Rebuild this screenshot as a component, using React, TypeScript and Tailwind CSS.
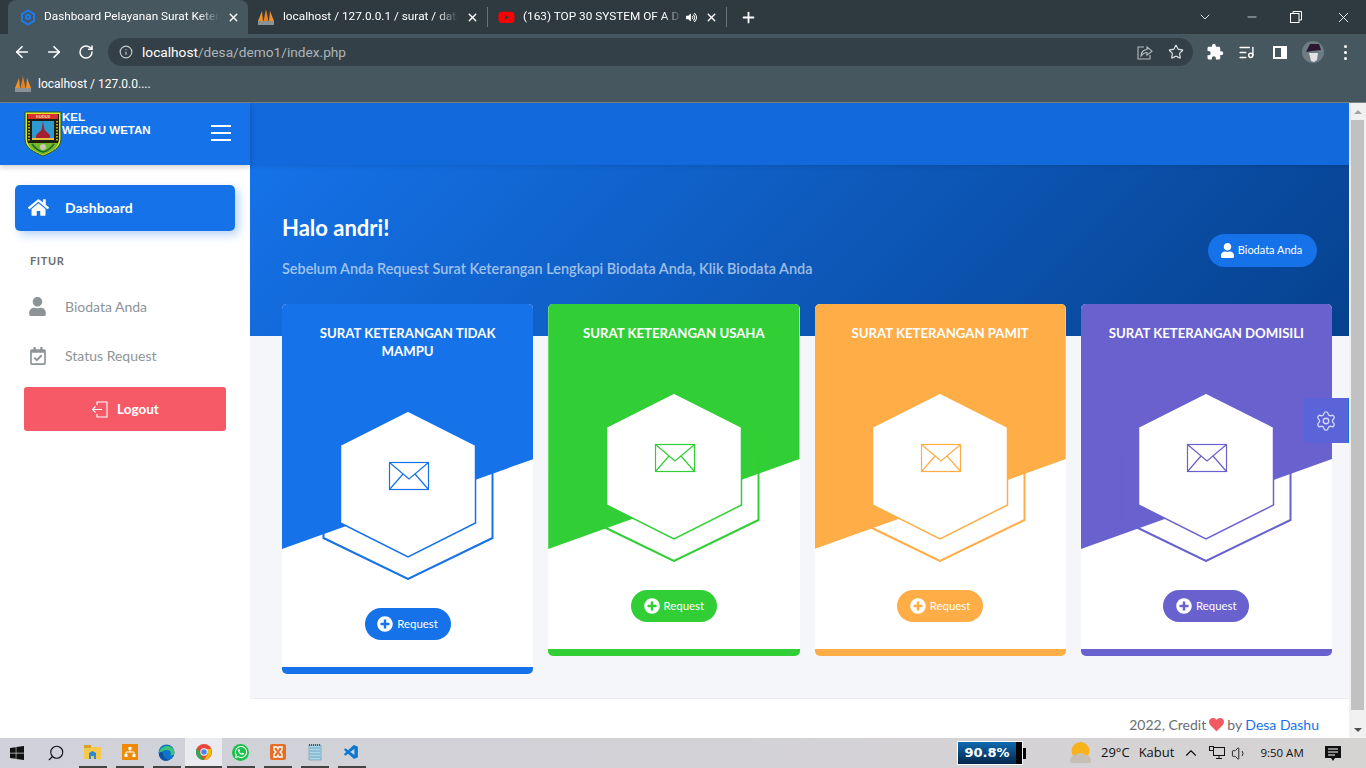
import { ArrowLeft, ArrowRight, ChevronDown, ChevronUp, Info, ListMusic, Minus, Plus, RotateCw, Search, Settings, Star, Volume1, X } from "lucide-react";
import { FaHeart, FaHome, FaPlusCircle, FaRegCalendarCheck, FaUser, FaVolumeUp, FaWhatsapp, FaWindows, FaYoutube } from "react-icons/fa";
import { MdExtension } from "react-icons/md";
import { VscVscode } from "react-icons/vsc";

const cards = [
  { title: "Surat Keterangan Tidak Mampu", color: "#1572e8", bg: "bg-[#1572e8]", border: "border-[#1572e8]" },
  { title: "Surat Keterangan Usaha", color: "#31ce36", bg: "bg-[#31ce36]", border: "border-[#31ce36]" },
  { title: "Surat Keterangan Pamit", color: "#ffad46", bg: "bg-[#ffad46]", border: "border-[#ffad46]" },
  { title: "Surat Keterangan Domisili", color: "#6861ce", bg: "bg-[#6861ce]", border: "border-[#6861ce]" },
];

function PmaIcon() {
  return (
    <svg width="18" height="18" viewBox="0 0 18 18">
      <path d="M1 13 5 3l1 10z" fill="#f0902a" />
      <path d="M6.500 13 9 1l2.500 12z" fill="#e8801c" />
      <path d="M12 13l1-10 4 10z" fill="#f0902a" />
      <rect x="1" y="13" width="16" height="4" fill="#8a9298" />
    </svg>
  );
}

function Tab({ title, icon, active, width, extra }: { title: string; icon: React.ReactNode; active?: boolean; width: string; extra?: React.ReactNode }) {
  return (
    <div className={`flex h-[34px] items-center pl-3 pr-2 ${width} ${active ? "rounded-t-lg bg-[#47575f]" : ""}`}>
      <div className="flex shrink-0 justify-center">{icon}</div>
      <span className="ml-2 min-w-0 flex-1 whitespace-nowrap text-[11.8px] text-white [mask-image:linear-gradient(to_right,black_88%,transparent)]">{title}</span>
      {extra}
      <X size={13} strokeWidth={2.5} className="ml-2 shrink-0 text-white" />
    </div>
  );
}

function BrowserChrome() {
  return (
    <div className="shrink-0 font-['Roboto',sans-serif]">
      <div className="flex h-[34px] items-center bg-[#2f3a40] pl-2 pr-0">
        <Tab
          active
          width="w-[240px]"
          title="Dashboard Pelayanan Surat Keter"
          icon={
            <svg width="16" height="17" viewBox="0 0 16 17" fill="none" stroke="#1a7cf0" strokeWidth="2">
              <path d="M8 1.500 14 5v7l-6 3.500L2 12V5z" />
              <circle cx="8" cy="8" r="2" />
            </svg>
          }
        />
        <Tab width="w-[242px] -ml-[3px]" title="localhost / 127.0.0.1 / surat / data" icon={<PmaIcon />} />
        <div className="h-[20px] w-px bg-[#66757c]" />
        <Tab
          width="w-[240px] -ml-[2px]"
          title="(163) TOP 30 SYSTEM OF A D"
          icon={<FaYoutube size={17} className="text-[#ff0000]" />}
          extra={<FaVolumeUp size={11} className="ml-1 shrink-0 text-white" />}
        />
        <div className="h-[20px] w-px bg-[#66757c]" />
        <Plus size={17} strokeWidth={2.5} className="ml-[13px] text-white" />
        <div className="ml-auto flex items-center text-white">
          <ChevronDown size={16} strokeWidth={1.25} className="mr-[32px]" />
          <Minus size={14} strokeWidth={1.25} className="mr-[31px]" />
          <svg width="12" height="12" viewBox="0 0 12 12" fill="none" stroke="white" className="mr-[33px]">
            <rect x="0.5" y="2.500" width="8.500" height="9" />
            <path d="M3 2V.5h8.500V9H9" />
          </svg>
          <X size={17} strokeWidth={1.25} className="mr-[14px]" />
        </div>
      </div>

      <div className="flex h-[34px] items-center bg-[#47575f] pl-[13px] pt-[2px]">
        <ArrowLeft size={18} strokeWidth={2.25} className="text-white" />
        <ArrowRight size={18} strokeWidth={2.25} className="ml-[14px] text-white" />
        <RotateCw size={16} strokeWidth={2.25} className="ml-[15px] text-white" />
        <div className="ml-[14px] flex h-[28px] w-[1085px] items-center rounded-full bg-[#344047] pl-[11px] pr-[9px]">
          <Info size={14} className="text-[#c5cbce]" />
          <span className="ml-[9px] text-[13.7px] text-white">localhost<span className="text-[#adb5b9]">/desa/demo1/index.php</span></span>
          <svg width="16" height="16" viewBox="0 0 16 16" fill="none" stroke="#b4bbbf" strokeWidth="1.1" className="ml-auto">
            <path d="M7 3H1v12h12v-4" />
            <path d="M4 12c0-4 3-6.500 6-6.500V3l5 4.200-5 4V8.500C7.500 8.500 5.500 10 4 12z" />
          </svg>
          <Star size={16} strokeWidth={1.75} className="ml-[15px] text-[#dfe3e5]" />
        </div>
        <MdExtension size={18} className="ml-[13px] text-white" />
        <ListMusic size={17} strokeWidth={2} className="ml-[14px] text-white" />
        <div className="ml-[18px] flex h-[13px] w-[14px] justify-start border-2 border-white">
          <div className="h-full w-[6px] bg-[#47575f]" />
          <div className="h-full flex-1 bg-white" />
        </div>
        <svg width="22" height="22" viewBox="0 0 22 22" className="ml-[15px]">
          <circle cx="11" cy="11" r="11" fill="#6e7c84" />
          <path d="M4 11 8 3h9l2 6-9 1z" fill="#2d1630" />
          <path d="M7 12h9l-1 7-3 2-3-1z" fill="#e2e2e2" />
        </svg>
        <div className="ml-[20px] flex flex-col gap-[3px]">
          <div className="size-[3px] rounded-full bg-white" />
          <div className="size-[3px] rounded-full bg-white" />
          <div className="size-[3px] rounded-full bg-white" />
        </div>
      </div>

      <div className="flex h-[35px] items-center border-b border-[#7a8488] bg-[#47575f] pb-[2px] pl-[14px]">
        <PmaIcon />
        <span className="ml-[6px] text-[12px] text-white">localhost / 127.0.0....</span>
      </div>
    </div>
  );
}

function CoatOfArms() {
  return (
    <svg width="38" height="46" viewBox="0 0 38 46">
      <path d="M1 1h36v27c0 9-9 13-18 17C10 41 1 37 1 28z" fill="#e5e22c" stroke="#1e5c22" />
      <path d="M3 3h32v25c0 7-8 11-16 14C11 39 3 35 3 28z" fill="#1d1d12" />
      <rect x="4" y="3" width="30" height="5" fill="#d8312d" />
      <text x="19" y="7" fontSize="4" fontWeight="700" textAnchor="middle" fill="#f4e7a0">KUDUS</text>
      <path d="M5 10v20M33 10v20" stroke="#e5e22c" strokeWidth="1.500" strokeDasharray="1.500 1.500" />
      <rect x="8" y="10" width="22" height="19" fill="#2e9bd0" />
      <path d="M19 10l1.500 9 5.500 5v5H12v-5l5.500-5z" fill="#a51f32" />
      <rect x="8" y="27" width="22" height="2" fill="#e8c23a" />
      <path d="M4 32h30c-1 6-9 9-15 12C13 41 5 38 4 32z" fill="#76b82a" />
      <path d="M8 33c3 4 7 7 11 8 4-1 8-4 11-8" fill="none" stroke="#176b2c" strokeWidth="1.500" />
      <circle cx="19" cy="36" r="3" fill="#c9c9b2" />
    </svg>
  );
}

function Sidebar() {
  return (
    <aside className="flex w-[250px] shrink-0 flex-col bg-white">
      <div className="relative z-10 flex h-[62px] items-start bg-[#1572e8] pl-[24px] pt-[8px] shadow-[0_2px_6px_rgba(0,0,0,0.2)]">
        <CoatOfArms />
        <p className="font-['Liberation_Sans',sans-serif] text-[11.5px] font-bold leading-[13px] text-white">KEL<br />WERGU WETAN</p>
        <div className="ml-auto mr-[19px] mt-[14px] flex w-[20px] flex-col gap-[5px]">
          <div className="h-[2px] bg-white" />
          <div className="h-[2px] bg-white" />
          <div className="h-[2px] bg-white" />
        </div>
      </div>
      <nav className="px-[15px] pt-[20px]">
        <div className="flex h-[46px] items-center rounded-[5px] bg-[#1572e8] pb-[2px] pl-[13px] text-white shadow-[4px_4px_10px_rgba(21,114,232,0.3)]">
          <FaHome size={21} />
          <span className="ml-[16px] text-[14px] font-bold">Dashboard</span>
        </div>
        <p className="mt-[23px] pl-[15px] text-[11px] font-bold leading-[14px] tracking-[0.6px] text-[#6b6e72]">FITUR</p>
        <div className="mt-[14px] flex h-[49px] items-center pl-[13px] text-[#8d9498]">
          <FaUser size={19} />
          <span className="ml-[18px] text-[14px]">Biodata Anda</span>
        </div>
        <div className="flex h-[49px] items-center pl-[14px] text-[#8d9498]">
          <FaRegCalendarCheck size={18} />
          <span className="ml-[18px] text-[14px]">Status Request</span>
        </div>
        <div className="ml-[9px] mt-[7px] flex h-[44px] w-[202px] items-center justify-center rounded-[3px] bg-[#f65a66] text-white">
          <svg width="17" height="17" viewBox="0 0 17 17" fill="none" stroke="white" strokeWidth="1.1">
            <path d="M6 4V1h10v15H6v-3" />
            <path d="M11 8.500H1.500M4.500 5.500l-3 3 3 3" />
          </svg>
          <span className="ml-[9px] text-[13.5px] font-bold">Logout</span>
        </div>
      </nav>
    </aside>
  );
}

function CardGraphic({ color }: { color: string }) {
  return (
    <svg width="172" height="170" viewBox="0 0 172 170" fill="none" className="relative">
      <path d="M1.500 63v65l84.500 41 84.500-41V63" stroke={color} strokeWidth="2" />
      <path d="M86 1 153.500 35v78L86 147l-67.500-34V35z" fill="white" stroke={color} strokeWidth="1.500" />
      <g stroke={color} strokeWidth="1.200">
        <rect x="67.500" y="52.500" width="39" height="27" />
        <path d="M67.500 52.500 87 69l19.500-16.500M67.500 79.500 81 64M106.500 79.500 93 64" />
      </g>
    </svg>
  );
}

function RequestCard({ title, color, bg, border }: { title: string; color: string; bg: string; border: string }) {
  return (
    <div className={`relative flex flex-1 flex-col items-center overflow-hidden rounded-[5px] border-b-[7px] bg-white px-[20px] pb-[27px] pt-[20px] ${border}`}>
      <div className={`absolute inset-x-0 top-0 h-[245px] [clip-path:polygon(0_0,100%_0,100%_63.3%,0_100%)] ${bg}`} />
      <h3 className="relative text-center text-[13.2px] font-bold uppercase leading-[18px] text-white">{title}</h3>
      <div className="relative mt-[50px]">
        <CardGraphic color={color} />
      </div>
      <div className={`relative mt-[28px] flex h-[32px] w-[86px] items-center justify-center rounded-full text-[11.4px] text-white ${bg}`}>
        <FaPlusCircle size={16} />
        <span className="ml-[4px]">Request</span>
      </div>
    </div>
  );
}

function Main() {
  return (
    <main className="relative flex min-w-0 flex-1 flex-col bg-[#f5f6fa]">
      <div className="relative z-[1] h-[62px] shrink-0 bg-[#1269db] shadow-[0_1px_4px_rgba(0,0,0,0.12)]" />
      <section className="flex h-[171px] shrink-0 items-start justify-between bg-[linear-gradient(-45deg,#06418e,#1572e8)] px-[32px] pt-[49px]">
        <div>
          <h2 className="text-[22px] font-bold leading-[28px] text-white">Halo andri!</h2>
          <p className="mt-[17px] text-[14.45px] font-semibold leading-[20px] text-white/60">Sebelum Anda Request Surat Keterangan Lengkapi Biodata Anda, Klik Biodata Anda</p>
        </div>
        <div className="mt-[20px] flex h-[33px] w-[109px] items-center justify-center rounded-full bg-[#1572e8] pr-[3px] text-[11px] text-white">
          <FaUser size={15} />
          <span className="ml-[3px]">Biodata Anda</span>
        </div>
      </section>
      <div className="relative -mt-[32px] flex items-start gap-[15px] pl-[32px] pr-[17px]">
        {cards.map((card) => (
          <RequestCard key={card.title} {...card} />
        ))}
      </div>
      <footer className="mt-auto flex h-[40px] shrink-0 items-end justify-end border-t border-[#ebedf2] bg-white pb-[3px] pr-[30px] text-[14px] text-[#6b6e72]">
        <span>2022, Credit</span>
        <FaHeart size={15} className="mx-[3px] mb-[3px] text-[#f25961]" />
        <span>by <span className="text-[#1572e8]">Desa Dashu</span></span>
      </footer>
      <div className="absolute right-0 top-[295px] flex h-[45px] w-[45px] items-center justify-center rounded-l-[5px] border-r border-[#1572e8] bg-[#5b63d8] text-[#d5d8f5]">
        <Settings size={22} strokeWidth={1.5} />
      </div>
    </main>
  );
}

function Scrollbar() {
  return (
    <div className="flex w-[17px] shrink-0 flex-col items-center bg-[#f1f1f1]">
      <div className="flex h-[17px] items-center justify-center"><div className="size-0 border-x-[4px] border-b-[4px] border-x-transparent border-b-[#a3a3a3]" /></div>
      <div className="h-[590px] w-[13px] bg-[#c1c1c1]" />
      <div className="mt-auto flex h-[17px] items-center justify-center"><div className="size-0 border-x-[4px] border-t-[4px] border-x-transparent border-t-[#505050]" /></div>
    </div>
  );
}

const taskIcons: React.ReactNode[] = [
  <svg key="folder" width="17" height="16" viewBox="0 0 17 16"><path d="M0 1h6l2 2h9v12H0z" fill="#f7c94b" /><rect x="0" y="1" width="7" height="3" fill="#d9a227" /><path d="M5 15V9l3.500-2L12 9v6h-2v-3H7v3z" fill="#2b88d8" /></svg>,
  <svg key="sublime" width="16" height="16" viewBox="0 0 16 16"><rect width="16" height="16" fill="#ef8a09" /><path d="M6.500 3h3v3h-3zM2.500 10h3v3h-3zM10.500 10h3v3h-3z" fill="white" /><path d="M8 6v2M4 10V8h8v2" stroke="white" fill="none" /></svg>,
  <svg key="edge" width="17" height="17" viewBox="0 0 17 17"><circle cx="8.500" cy="8.500" r="8" fill="#0f74c9" /><path d="M1 9C2 3 8 1 12 2.500c3 1.200 4.500 4 4.500 6.500 0 2-2.500 2.500-4.500 2 2-2 .5-5-3-5S3 8 1 9z" fill="#3bc47a" /><path d="M5 9c-.5 4 3 7 7 6.500-4 3-11 1-11-6 1-1.500 3-1.500 4-.5z" fill="#0b4f9e" /></svg>,
  <svg key="chrome" width="16" height="16" viewBox="0 0 16 16"><circle cx="8" cy="8" r="8" fill="#e8453c" /><path d="M8 16A8 8 0 0 1 1 4l3.500 6L8 16z" fill="#34a853" /><path d="M8 16l4-6.500L8 5h7a8 8 0 0 1-7 11z" fill="#fbbc05" /><circle cx="8" cy="8" r="3.700" fill="white" /><circle cx="8" cy="8" r="2.800" fill="#4285f4" /></svg>,
  <div key="wa" className="flex size-[17px] items-center justify-center rounded-full bg-[#1cc04a]"><FaWhatsapp size={14} className="text-white" /></div>,
  <svg key="xampp" width="16" height="16" viewBox="0 0 16 16"><rect width="16" height="16" rx="2" fill="#e4702a" /><path d="M4 3h3l1 2 1-2h3v3l-2 2 2 2v3H9L8 11l-1 2H4v-3l2-2-2-2z" fill="none" stroke="white" strokeWidth="1.300" /></svg>,
  <svg key="notepad" width="15" height="17" viewBox="0 0 15 17"><path d="M2 1h12v15H2z" fill="#a9d6ea" stroke="#6e8c9c" strokeWidth=".6" /><path d="M3 4h10M3 7h10M3 10h10M3 13h10" stroke="#5a93b3" strokeWidth=".7" /><path d="M2 1h12" stroke="#333" strokeWidth="1.400" strokeDasharray="1 1" /></svg>,
  <VscVscode key="vscode" size={17} className="text-[#0a78d0]" />,
];

function Taskbar() {
  return (
    <div className="flex h-[30px] shrink-0 items-center bg-[linear-gradient(to_right,#d0d1da,#d6d3d3)] font-['Open_Sans',sans-serif] text-[#111]">
      <div className="flex w-[37px] justify-center pr-[3px]"><FaWindows size={16} /></div>
      <div className="flex w-[37px] justify-center"><Search size={18} strokeWidth={1.5} className="-scale-x-100" /></div>
      {taskIcons.map((icon, i) => (
        <div key={i} className={`flex h-[30px] w-[37px] flex-col items-center ${i === 3 ? "bg-[#eaebef]" : ""}`}>
          <div className="flex flex-1 items-center justify-center">{icon}</div>
          <div className={`h-[2px] bg-[#444] ${i === 3 ? "w-[37px]" : "w-[28px]"}`} />
        </div>
      ))}
      <div className="ml-[587px] flex items-center">
        <div className="flex h-[24px] w-[66px] items-center border border-white bg-black">
          <div className="flex h-full w-[58px] items-center justify-center bg-[linear-gradient(to_bottom,#0e6ab0,#03264a)] font-['DejaVu_Sans',sans-serif] text-[13px] font-bold text-white">90.8%</div>
        </div>
        <div className="h-[11px] w-[3px] bg-black" />
      </div>
      <svg width="23" height="22" viewBox="0 0 23 22" className="ml-[43px]">
        <circle cx="11.500" cy="9" r="9" fill="#f7b21c" />
        <path d="M1 19c0-4 3-6 6-6 1-2 6-3 9 0 3 0 6 2 6 6 0 1-1 2-2 2H3c-1 0-2-1-2-2z" fill="#c7beb4" />
      </svg>
      <span className="ml-[9px] text-[13px]">29°C</span>
      <span className="ml-[9px] text-[13px]">Kabut</span>
      <ChevronUp size={18} strokeWidth={1.5} className="ml-[8px]" />
      <svg width="16" height="14" viewBox="0 0 16 14" fill="none" stroke="#111" className="ml-[9px]">
        <rect x="4.500" y="1.500" width="11" height="8" />
        <rect x="0.500" y="0.500" width="4" height="4" fill="#d6d3d3" />
        <path d="M7 12.500h6M10 10v2.500" />
      </svg>
      <Volume1 size={17} strokeWidth={1.25} className="ml-[6px]" />
      <span className="ml-[12px] text-[11.5px]">9:50 AM</span>
      <svg width="16" height="15" viewBox="0 0 16 15" className="ml-[21px]">
        <path d="M0 0h16v12h-6l-2 3-2-3H0z" fill="#111" />
        <path d="M3 3h10M3 6h10M3 9h7" stroke="white" />
      </svg>
    </div>
  );
}

export default function App() {
  return (
    <div className="flex h-[768px] w-[1366px] flex-col overflow-hidden font-['Lato',sans-serif]">
      <BrowserChrome />
      <div className="flex min-h-0 flex-1">
        <Sidebar />
        <Main />
        <Scrollbar />
      </div>
      <Taskbar />
    </div>
  );
}
